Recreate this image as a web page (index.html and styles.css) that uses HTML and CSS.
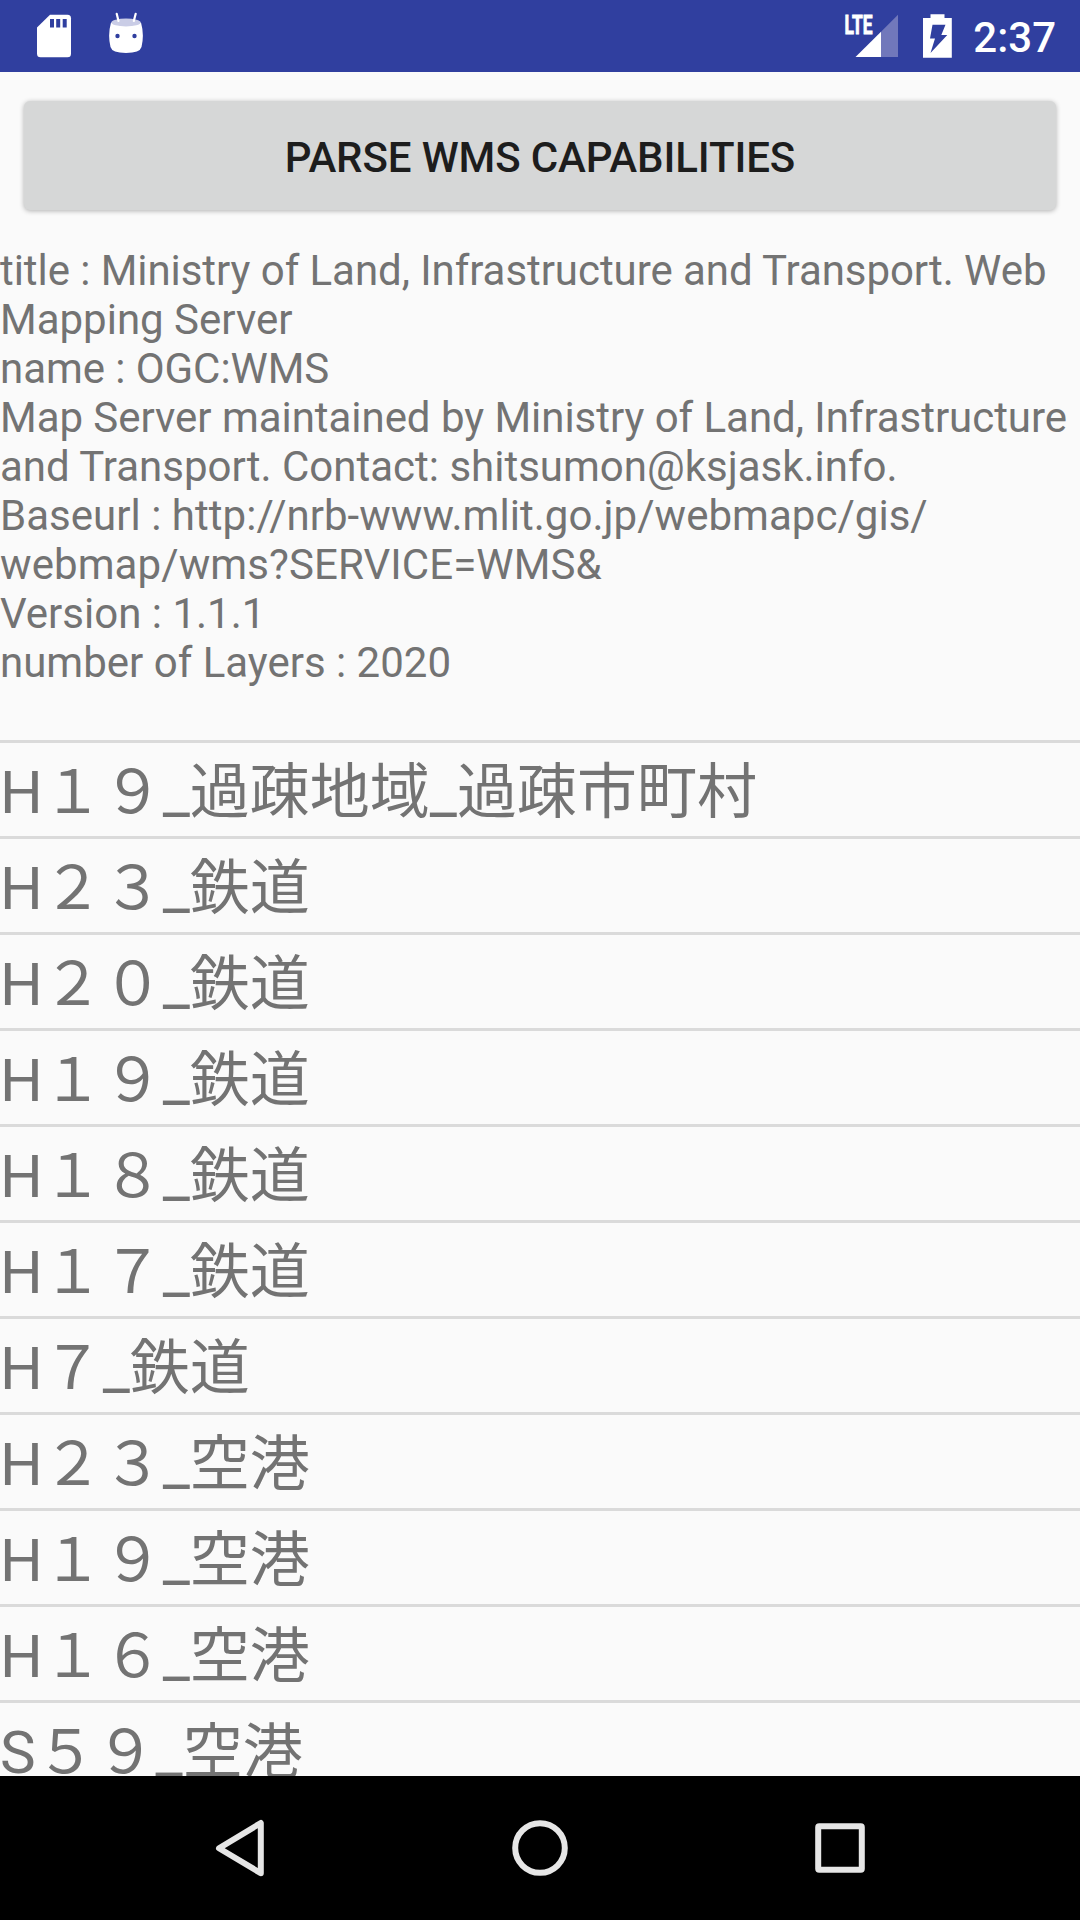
FILE: index.html
```html
<!DOCTYPE html>
<html lang="ja">
<head>
<meta charset="utf-8">
<title>WMS Capabilities</title>
<link rel="stylesheet" href="styles.css">
</head>
<body>
<header class="status-bar">
  <svg class="sd" width="36" height="72" viewBox="36 0 36 72"><path fill="#fff" d="M50 14.700h17.500a3.500 3.500 0 0 1 3.500 3.500v35.500a3.500 3.500 0 0 1-3.500 3.500h-27a3.500 3.500 0 0 1-3.500-3.500V27.500z"/><path fill="#303f9f" d="M50 19h4v8.500h-4zM56.200 19h4v8.500h-4zM62.700 19h4v8.500h-4z"/></svg>
  <svg class="droid" width="36" height="72" viewBox="108 0 36 72"><path fill="#fff" d="M111 22.500Q126 29 141 22.500Q144.500 35 141.500 47Q140 52.800 126 53Q112 52.800 110.500 47Q107.500 35 111 22.500z"/><ellipse cx="126" cy="22.500" rx="14.700" ry="3.900" fill="#cacde6"/><path d="M116.700 13.800l1.800 7.200M135.700 13.800l-1.900 7.200" stroke="#fff" stroke-width="2.200" stroke-linecap="round"/><circle cx="117.500" cy="36" r="2.200" fill="#303f9f"/><circle cx="134.500" cy="36" r="2.200" fill="#303f9f"/></svg>
  <span class="spacer"></span>
  <svg class="signal" width="54" height="72" viewBox="845 0 54 72"><path fill="#7178bb" d="M898 14.700V57h-17V31.700z"/><path fill="#fff" d="M881 31.700V57h-25.500z"/><text class="lte" x="844.500" y="33.500" textLength="28" lengthAdjust="spacingAndGlyphs">LTE</text></svg>
  <svg class="battery" width="30" height="72" viewBox="922 0 30 72"><path fill="#fff" d="M930.500 14.200h14V18h7.300v39.800H923V18h7.500z"/><path fill="#303f9f" d="M932.500 24.700h13L941.300 35h6L930.500 53l4.500-14.500h-5z"/></svg>
  <span class="clock">2:37</span>
</header>
<main class="content">
  <button class="parse">PARSE WMS CAPABILITIES</button>
  <div class="info">
    <div class="tight">title : Ministry of Land, Infrastructure and Transport. Web</div>
    <div>Mapping Server</div>
    <div class="tight">name : OGC:WMS</div>
    <div class="snug">Map Server maintained by Ministry of Land, Infrastructure</div>
    <div>and Transport. Contact: shitsumon@ksjask.info.</div>
    <div class="loose">Baseurl : http://nrb-www.mlit.go.jp/webmapc/gis/</div>
    <div class="looser">webmap/wms?SERVICE=WMS&amp;</div>
    <div>Version : 1.1.1</div>
    <div>number of Layers : 2020</div>
  </div>
  <ul class="layers">
    <li>H１９_過疎地域_過疎市町村</li>
    <li>H２３_鉄道</li>
    <li>H２０_鉄道</li>
    <li>H１９_鉄道</li>
    <li>H１８_鉄道</li>
    <li>H１７_鉄道</li>
    <li>H７_鉄道</li>
    <li>H２３_空港</li>
    <li>H１９_空港</li>
    <li>H１６_空港</li>
    <li>S５９_空港</li>
  </ul>
</main>
<nav class="nav-bar">
  <svg width="60" height="60" viewBox="210 1818 60 60"><path d="M260.800 1823v50.200L219 1848.200z"/></svg>
  <svg width="60" height="60" viewBox="510 1818 60 60"><circle cx="540" cy="1848" r="24.800"/></svg>
  <svg width="60" height="60" viewBox="810 1818 60 60"><rect x="818.200" y="1826.200" width="43.600" height="43.600" rx="1"/></svg>
</nav>
</body>
</html>
```
FILE: styles.css
```css
body {
  margin: 0;
  width: 1080px;
  height: 1920px;
  display: flex;
  flex-direction: column;
  background: #fafafa;
  font-family: Roboto, "Noto Sans CJK JP", sans-serif;
  color: #737373;
  overflow: hidden;
}
.status-bar {
  height: 72px;
  background: #303f9f;
  display: flex;
  align-items: center;
  padding: 0 24px 0 36px;
  box-sizing: border-box;
  flex: none;
}
.droid { margin-left: 36px; }
.spacer { flex: 1; }
.signal { margin-right: 23px; overflow: visible; }
.battery { margin-right: 21px; }
.lte {
  font: 700 26px Roboto, sans-serif;
  fill: #fff;
  stroke: #fff;
  stroke-width: .9px;
}
.clock {
  font-size: 42px;
  color: #fff;
  font-weight: 500;
  padding-top: 2px;
}
.content {
  flex: 1;
  min-height: 0;
  overflow: hidden;
}
.parse {
  display: block;
  width: 1032px;
  height: 109px;
  margin: 29px 24px 0;
  padding: 4px 0 0;
  border: 0;
  border-radius: 6px;
  background: #d6d7d7;
  box-shadow: 0 1px 5px rgba(0, 0, 0, .3);
  font: 500 42px Roboto, sans-serif;
  letter-spacing: -.12px;
  color: #1d1d1d;
}
.info {
  margin-top: 36px;
  font-size: 42px;
  line-height: 49px;
  white-space: nowrap;
}
.tight { letter-spacing: -.06px; }
.snug { letter-spacing: -.04px; }
.loose { letter-spacing: .03px; }
.looser { letter-spacing: .09px; }
.layers {
  list-style: none;
  margin: 53px 0 0;
  padding: 0;
}
.layers li {
  height: 93px;
  border-top: 3px solid #dadada;
  font-size: 60px;
  line-height: 99px;
  white-space: nowrap;
}
.nav-bar {
  height: 144px;
  background: #000;
  flex: none;
  display: flex;
  align-items: center;
  justify-content: center;
  gap: 240px;
}
.nav-bar svg {
  fill: none;
  stroke: #e6e6e6;
  stroke-width: 6px;
  stroke-linejoin: round;
}
```
